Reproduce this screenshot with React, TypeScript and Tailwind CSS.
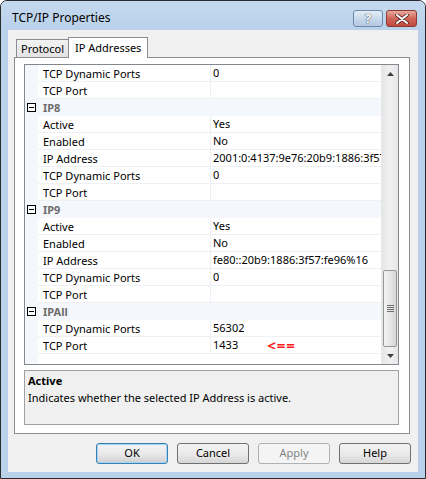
import React from "react";

type Row = { cat?: string; n?: string; v?: string; mark?: boolean };

const rows: Row[] = [
  { n: "TCP Dynamic Ports", v: "0" },
  { n: "TCP Port", v: "" },
  { cat: "IP8" },
  { n: "Active", v: "Yes" },
  { n: "Enabled", v: "No" },
  { n: "IP Address", v: "2001:0:4137:9e76:20b9:1886:3f57:fe96" },
  { n: "TCP Dynamic Ports", v: "0" },
  { n: "TCP Port", v: "" },
  { cat: "IP9" },
  { n: "Active", v: "Yes" },
  { n: "Enabled", v: "No" },
  { n: "IP Address", v: "fe80::20b9:1886:3f57:fe96%16" },
  { n: "TCP Dynamic Ports", v: "0" },
  { n: "TCP Port", v: "" },
  { cat: "IPAll" },
  { n: "TCP Dynamic Ports", v: "56302" },
  { n: "TCP Port", v: "1433", mark: true },
];

function MinusBox() {
  return (
    <div className="w-[9px] h-[9px] border border-black bg-white flex items-center justify-center">
      <div className="w-[5px] h-[1px] bg-black" />
    </div>
  );
}

function GridRow({ r }: { r: Row }) {
  if (r.cat) {
    return (
      <div className="h-[17px] flex bg-[#f4f7fc]">
        <div className="w-[13px] flex items-center pl-[2px]">
          <MinusBox />
        </div>
        <div className="pl-[5px] leading-[17px] font-bold text-[#6d6d6d]">{r.cat}</div>
      </div>
    );
  }
  return (
    <div className="h-[17px] flex">
      <div className="w-[13px] bg-[#f4f7fc] shrink-0" />
      <div className="w-[173px] shrink-0 border-r border-b border-[#eef0f4] pl-[5px] leading-[17px] text-black whitespace-nowrap overflow-hidden">
        {r.n}
      </div>
      <div className="flex-1 min-w-0 border-b border-[#eef0f4] pl-[2px] text-black whitespace-nowrap flex items-center">
        <span className="leading-[16px] overflow-hidden">{r.v}</span>
        {r.mark && (
          <span className="ml-[29px] text-[#ff1a1a] font-bold text-[15px] leading-[15px] tracking-[1px]">&lt;==</span>
        )}
      </div>
    </div>
  );
}

function Scrollbar() {
  return (
    <div className="w-[17px] h-full flex flex-col bg-gradient-to-r from-[#e6e6e6] via-[#f0f0f0] to-[#e6e6e6] border-l border-[#e8e8e8]">
      <div className="h-[17px] flex items-center justify-center">
        <svg width="7" height="4" viewBox="0 0 7 4">
          <polygon points="3.5,0 7,4 0,4" fill="#404040" />
        </svg>
      </div>
      <div className="flex-1" />
      <div className="h-[77px] mx-[1px] rounded-[2px] border border-[#979797] bg-gradient-to-r from-[#f3f3f3] via-[#e6e6e6] to-[#d4d4d4] flex flex-col items-center justify-center gap-[1px]">
        <div className="w-[7px] h-[1px] bg-[#6f6f6f]" />
        <div className="w-[7px] h-[1px] bg-[#6f6f6f]" />
        <div className="w-[7px] h-[1px] bg-[#6f6f6f]" />
        <div className="w-[7px] h-[1px] bg-[#6f6f6f]" />
      </div>
      <div className="h-[17px] flex items-center justify-center">
        <svg width="7" height="4" viewBox="0 0 7 4">
          <polygon points="0,0 7,0 3.5,4" fill="#404040" />
        </svg>
      </div>
    </div>
  );
}

function Btn({ label, kind }: { label: string; kind?: "default" | "disabled" }) {
  const base = "w-[72px] h-[21px] rounded-[3px] flex items-center justify-center text-[11px]";
  if (kind === "default") {
    return (
      <div className={`${base} border border-[#3c7fb1] bg-gradient-to-b from-[#f2f2f2] via-[#ebebeb] to-[#cfcfcf] shadow-[inset_0_0_0_1px_#9fd6f5] text-black`}>
        {label}
      </div>
    );
  }
  if (kind === "disabled") {
    return (
      <div className={`${base} border border-[#adb2b5] bg-[#f4f4f4] text-[#838383]`}>{label}</div>
    );
  }
  return (
    <div className={`${base} border border-[#707070] bg-gradient-to-b from-[#f2f2f2] via-[#ebebeb] to-[#d6d6d6] text-black`}>
      {label}
    </div>
  );
}

export default function App() {
  return (
    <div
      className="w-[426px] h-[479px] bg-white"
      style={{ fontFamily: '"Noto Sans", "Liberation Sans", sans-serif' }}
    >
      <div className="w-full h-full flex flex-col rounded-t-[7px] border border-[#2a2a2a] bg-[#b9d1ea] overflow-hidden">
        {/* Title bar */}
        <div className="h-[29px] shrink-0 flex pl-[11px] pr-[8px] bg-gradient-to-b from-[#c4d9ef] to-[#b9d1ea]">
          <div className="flex-1 flex items-center pt-[5px] text-[12px] text-black">TCP/IP Properties</div>
          <div className="flex gap-[3px] pt-[9px]">
            <div className="w-[30px] h-[17px] rounded-[3px] border border-[#6f8aa8] bg-gradient-to-b from-[#e4edf7] via-[#c9d9ec] to-[#b3c8e0] flex items-center justify-center">
              <span className="text-[13px] leading-[13px] font-bold text-white [text-shadow:0_0_1px_#2c3e55,0_0_1px_#2c3e55]">?</span>
            </div>
            <div className="w-[31px] h-[17px] rounded-[3px] border border-[#8b3a32] bg-gradient-to-b from-[#e9a99f] via-[#d0655a] to-[#c24a3e] flex items-center justify-center">
              <svg width="14" height="10" viewBox="0 0 14 10">
                <path d="M2 1 L12 9 M12 1 L2 9" stroke="#5a2420" strokeWidth="3.6" strokeLinecap="round" />
                <path d="M2 1 L12 9 M12 1 L2 9" stroke="#ffffff" strokeWidth="2" strokeLinecap="round" />
              </svg>
            </div>
          </div>
        </div>

        {/* Client area */}
        <div className="flex-1 mx-[7px] mb-[6px] bg-[#f0f0f0] flex flex-col pl-[6px]">
          {/* Tabs */}
          <div className="h-[20px] mt-[7px] flex items-end pl-[2px] relative z-10">
            <div className="h-[18px] px-[4px] border border-b-0 border-[#898c95] bg-gradient-to-b from-[#f2f2f2] to-[#e3e3e3] text-[11px] leading-[18px] text-black">
              Protocol
            </div>
            <div className="h-[21px] -mb-[1px] -ml-[1px] px-[6px] border border-b-0 border-[#898c95] bg-white text-[11px] leading-[19px] text-black">
              IP Addresses
            </div>
          </div>

          {/* Tab panel */}
          <div className="w-[396px] h-[377px] border border-[#898c95] bg-white flex flex-col pl-[9px] pt-[6px]">
            {/* Property grid */}
            <div className="w-[375px] h-[301px] border border-[#828790] flex text-[11px]">
              <div className="flex-1 min-w-0 flex flex-col">
                {rows.map((r, i) => (
                  <GridRow key={i} r={r} />
                ))}
                <div className="flex-1 flex">
                  <div className="w-[13px] bg-[#f4f7fc]" />
                </div>
              </div>
              <Scrollbar />
            </div>

            {/* Help pane */}
            <div className="w-[375px] h-[55px] mt-[5px] border border-[#a0a0a0] bg-[#f0f0f0] px-[3px] pt-[2px] text-[11px] text-black">
              <div className="font-bold leading-[16px]">Active</div>
              <div className="leading-[17px]">Indicates whether the selected IP Address is active.</div>
            </div>
          </div>

          {/* Buttons */}
          <div className="mt-[9px] flex justify-end gap-[9px] pr-[7px]">
            <Btn label="OK" kind="default" />
            <Btn label="Cancel" />
            <Btn label="Apply" kind="disabled" />
            <Btn label="Help" />
          </div>
        </div>
      </div>
    </div>
  );
}
